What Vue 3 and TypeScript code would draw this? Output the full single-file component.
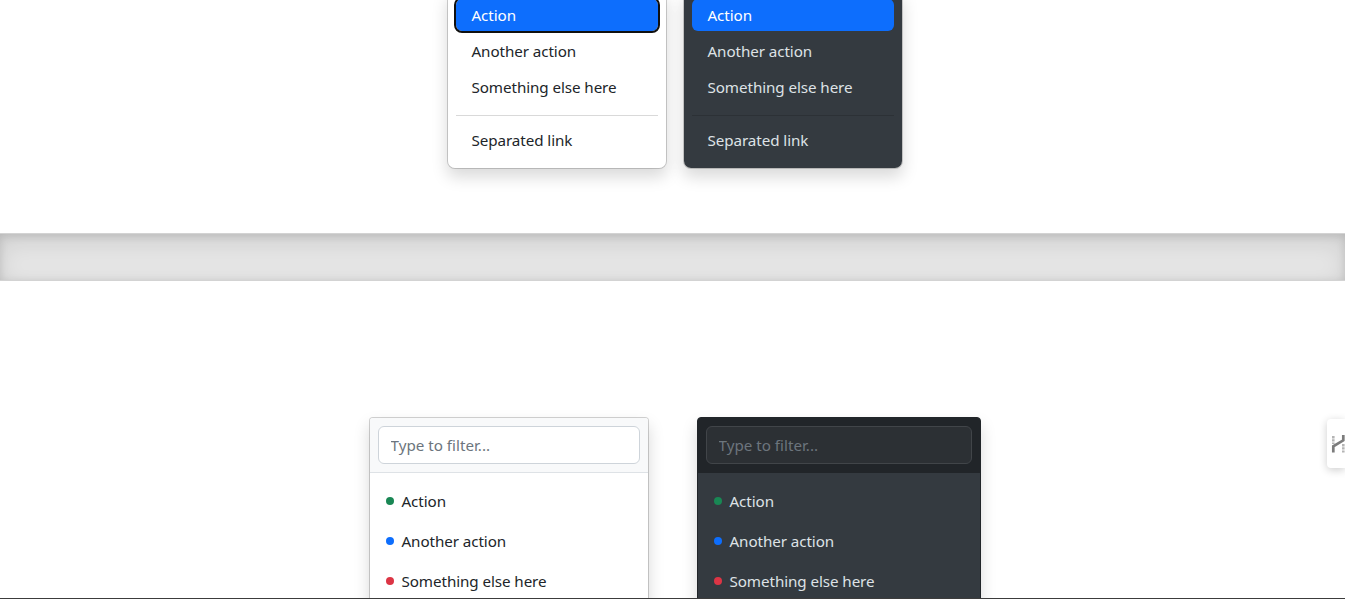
<script setup lang="ts">
interface Status {
  label: string
  tone: string
}

const links: string[] = ['Action', 'Another action', 'Something else here']
const statuses: Status[] = [
  { label: 'Action', tone: 'green' },
  { label: 'Another action', tone: 'blue' },
  { label: 'Something else here', tone: 'red' },
]
const themes: string[] = ['light', 'dark']
</script>

<template>
  <main class="page">
    <section class="menus">
      <ul v-for="theme in themes" :key="theme" class="menu" :class="theme">
        <li v-for="(link, i) in links" :key="link">
          <a class="item" :class="{ active: i === 0 }">{{ link }}</a>
        </li>
        <li><hr class="rule" /></li>
        <li><a class="item">Separated link</a></li>
      </ul>
    </section>

    <div class="divider"></div>

    <section class="filters">
      <div v-for="theme in themes" :key="theme" class="panel" :class="theme">
        <form class="search">
          <input class="field" type="search" placeholder="Type to filter..." />
        </form>
        <ul class="list">
          <li v-for="s in statuses" :key="s.label" class="entry">
            <span class="dot" :class="s.tone"></span>
            <span>{{ s.label }}</span>
          </li>
        </ul>
      </div>
    </section>

    <aside class="widget">
      <svg width="18" height="49" viewBox="0 0 18 49">
        <path d="M6.300 17V25M16.300 25V33.500" fill="none" stroke="#b4b4b4" stroke-width="2.600" stroke-dasharray="2.400 .8" />
        <path d="M6.300 33.500V27.300L16.300 21.300V16" fill="none" stroke="#7c7c7c" stroke-width="2.700" />
      </svg>
    </aside>
    <div class="edge"></div>
  </main>
</template>

<style>
body {
  margin: 0;
  background: #fff;
  overflow: hidden;
}
</style>

<style scoped>
* {
  box-sizing: border-box;
}
.page {
  position: relative;
  height: 599px;
  overflow: hidden;
  display: flex;
  flex-direction: column;
  font: 15.2px/24px 'Noto Sans', 'Open Sans', sans-serif;
  letter-spacing: -0.08px;
  color: #212529;
  background: #fff;
}
ul {
  list-style: none;
  margin: 0;
  padding: 0;
}
.menus {
  flex: none;
  height: 233px;
  display: flex;
  align-items: flex-end;
  justify-content: center;
  gap: 16px;
  padding: 0 0 64px 5px;
}
.menu {
  width: 220px;
  padding: 8px;
  border: 1px solid rgba(0, 0, 0, 0.175);
  border-radius: 8px;
  background: #fff;
  background-clip: padding-box;
  box-shadow: 0 8px 16px rgba(0, 0, 0, 0.15);
}
.menu.dark {
  background-color: #343a40;
  color: #dee2e6;
}
.item {
  display: block;
  height: 32px;
  margin-bottom: 4px;
  padding: 4px 15.5px;
  border-radius: 6px;
  white-space: nowrap;
}
.item.active {
  background: #0d6efd;
  color: #fff;
}
.light .item.active {
  outline: 2px solid #101010;
}
.rule {
  height: 1px;
  margin: 8px 0;
  border: 0;
  background: rgba(0, 0, 0, 0.15);
}
.menu li {
  display: flow-root;
}
.divider {
  flex: none;
  height: 48px;
  background: rgba(0, 0, 0, 0.1);
  border: solid rgba(0, 0, 0, 0.08);
  border-width: 1px 0;
  box-shadow: inset 0 8px 24px rgba(0, 0, 0, 0.1), inset 0 2px 8px rgba(0, 0, 0, 0.12);
}
.filters {
  flex: none;
  display: flex;
  justify-content: center;
  align-items: flex-start;
  gap: 48px;
  padding: 136px 0 0 5px;
}
.panel {
  width: 280px;
  height: 260px;
  border: 1px solid rgba(0, 0, 0, 0.175);
  border-radius: 4px;
  background: #fff;
  background-clip: padding-box;
  box-shadow: 0 8px 16px rgba(0, 0, 0, 0.15);
  overflow: hidden;
}
.panel.dark {
  width: 284px;
  background: #343a40;
  border-color: #212529;
  color: #dee2e6;
}
.search {
  height: 55px;
  padding: 8px;
  background: #f8f9fa;
  border-bottom: 1px solid #dee2e6;
}
.dark .search {
  background: #212529;
  border-color: #212529;
}
.field {
  display: block;
  width: 100%;
  height: 38px;
  padding: 6px 11.5px;
  border: 1px solid #ced4da;
  border-radius: 6px;
  background: #fff;
  font: inherit;
  appearance: none;
}
.field::placeholder {
  color: #6c757d;
  opacity: 1;
}
.dark .field {
  background: #2c3034;
  border-color: #414549;
}
.list {
  padding-top: 8px;
}
.entry {
  display: flex;
  align-items: center;
  gap: 7.5px;
  height: 40px;
  padding: 0 16px;
  white-space: nowrap;
}
.dot {
  width: 8px;
  height: 8px;
  border-radius: 50%;
}
.green {
  background: #198754;
}
.blue {
  background: #0d6efd;
}
.red {
  background: #dc3545;
}
.widget {
  position: absolute;
  top: 419px;
  right: 0;
  width: 18px;
  height: 49px;
  border-radius: 4px 0 0 4px;
  background: #fff;
  box-shadow: 0 2px 8px rgba(0, 0, 0, 0.2);
}
.widget svg {
  display: block;
}
.edge {
  position: absolute;
  left: 0;
  right: 0;
  bottom: 0;
  height: 1px;
  background: #3c3c3c;
}
</style>
